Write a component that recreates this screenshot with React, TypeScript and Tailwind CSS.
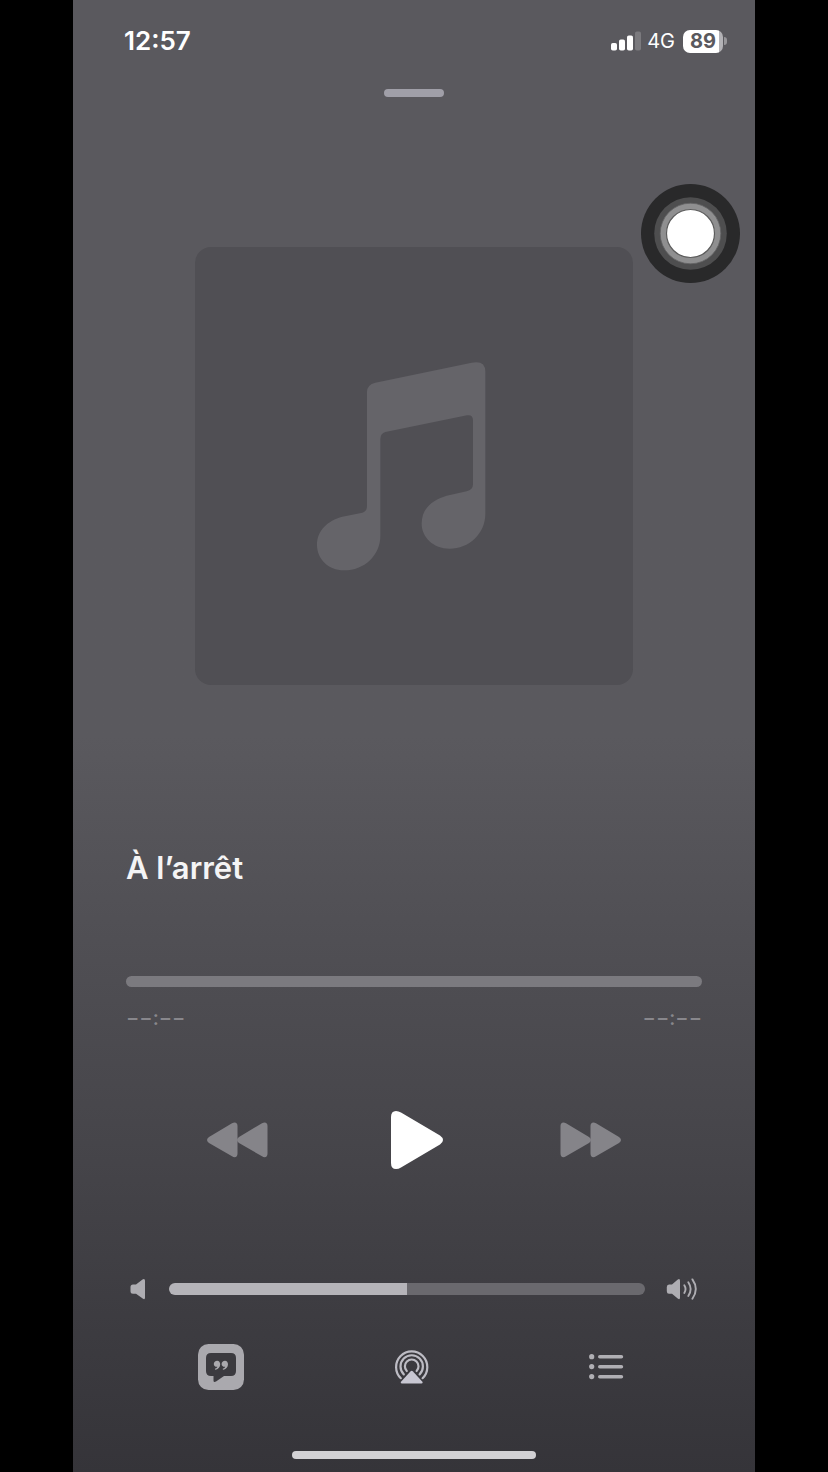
import { useState } from "react";

function StatusBar() {
  return (
    <header className="flex h-[82px] items-center justify-between pr-7 pl-[51px]">
      <time className="text-[26px] leading-8 font-semibold">12:57</time>
      <div className="flex items-center gap-2">
        <div className="flex items-center gap-1.5">
          <svg className="h-5 w-[30px]" viewBox="0 0 30 20" fill="currentColor" aria-hidden="true">
            <rect x="0" y="12" width="6" height="7.5" rx="1.8" />
            <rect x="8" y="8.5" width="6" height="11" rx="1.8" />
            <rect x="16" y="4.5" width="6" height="15" rx="1.8" />
            <rect x="24" y="0.5" width="6" height="19" rx="1.8" opacity="0.2" />
          </svg>
          <span className="text-xl leading-6">4G</span>
        </div>
        <div className="flex items-center gap-px">
          <span className="flex h-[23px] w-10 items-center justify-center rounded-[7px] bg-linear-to-r from-white from-90% to-[#b3b2b6] to-90% text-xl leading-6 font-bold text-[#5a595e]">
            89
          </span>
          <span className="h-2 w-[3px] rounded-r-full bg-[#97969a]" />
        </div>
      </div>
    </header>
  );
}

function AssistiveTouch() {
  return (
    <button type="button" aria-label="AssistiveTouch" className="absolute top-[184px] right-[15px]">
      <svg className="size-[99px]" viewBox="0 0 99 99" aria-hidden="true">
        <circle cx="49.5" cy="49.5" r="49.5" fill="#29292a" />
        <circle cx="49.5" cy="49.5" r="36.3" fill="#4e4e4f" />
        <circle cx="49.5" cy="49.5" r="30.3" fill="#8f8f90" stroke="#636364" strokeWidth="0.8" />
        <circle cx="49.5" cy="49.5" r="24" fill="#fff" stroke="#5c5c5c" strokeWidth="1.2" />
      </svg>
    </button>
  );
}

function Artwork() {
  return (
    <div className="mx-auto mt-[150px] flex aspect-square w-full max-w-[438px] items-center justify-center rounded-2xl bg-[#504f54]">
      <svg className="h-[250px] w-[228px]" viewBox="0 0 684 750" fill="#656469" aria-hidden="true">
        <path d="M201 153 Q201 131 226 125 L515 65 Q556 57 556 92 V518 C556 578 507 623 449 623 C400 623 365 588 365 548 C365 503 395 478 440 464 L500 451 Q519 446 519 430 V238 Q519 220 501 223 L256 273 Q241 277 241 294 V584 C241 643 193 688 132 688 C84 688 51 653 51 612 C51 568 83 539 127 527 L187 515 Q201 512 201 494 Z" />
      </svg>
    </div>
  );
}

function SkipIcon({ flip = false }: { flip?: boolean }) {
  return (
    <svg
      className={`h-9 w-[61px] ${flip ? "-scale-x-100" : ""}`}
      viewBox="0 0 61 36"
      fill="#858489"
      aria-hidden="true"
    >
      <path d="M0.5 4 Q0.5 0.5 3.5 0.5 Q4.5 0.5 6 1.3 L29 15 Q31 16.4 31 18 Q31 19.6 29 21 L6 34.3 Q4.5 35.2 3.5 35.2 Q0.5 35 0.5 31.5 Z" />
      <path d="M30.5 4 Q30.5 0.5 33.5 0.5 Q34.5 0.5 36 1.3 L59 15 Q61 16.4 61 18 Q61 19.6 59 21 L36 34.3 Q34.5 35.2 33.5 35.2 Q30.5 35 30.5 31.5 Z" />
    </svg>
  );
}

function PlaybackControls() {
  return (
    <div className="mt-20 flex h-[60px] items-center justify-between px-[81px]">
      <button type="button" aria-label="Précédent">
        <SkipIcon flip />
      </button>
      <button type="button" aria-label="Lecture">
        <svg className="h-[60px] w-[58px]" viewBox="0 0 58 60" fill="currentColor" aria-hidden="true">
          <path d="M6 7 Q6 1 11 1 Q13.5 1 16 2.5 L55 25.5 Q58 27.6 58 30 Q58 32.6 55 34.6 L16 57.5 Q13.5 59 11 59 Q6 59 6 53 Z" />
        </svg>
      </button>
      <button type="button" aria-label="Suivant">
        <SkipIcon />
      </button>
    </div>
  );
}

function VolumeControl() {
  const [volume, setVolume] = useState(50);

  return (
    <div className="mt-[107px] flex h-6 items-center px-1">
      <svg className="h-6 w-4" viewBox="0 0 16 24" fill="#aeadb2" aria-hidden="true">
        <path d="M3 7.5 H6 L12.5 2.4 Q15 1 15 3.8 V20.7 Q15 23 12.7 21.6 L6 16.8 H3 Q0.5 16.8 0.5 14.3 V10 Q0.5 7.5 3 7.5 Z" />
      </svg>
      <input
        type="range"
        aria-label="Volume"
        min={0}
        max={100}
        value={volume}
        onChange={(e) => setVolume(Number(e.target.value))}
        className="mr-[21px] ml-[23px] h-3 min-w-0 flex-1 appearance-none rounded-full [&::-webkit-slider-thumb]:size-0 [&::-webkit-slider-thumb]:appearance-none"
        style={{ background: `linear-gradient(to right, #b5b4b9 ${volume}%, #6a696e ${volume}%)` }}
      />
      <svg className="h-6 w-8" viewBox="0 0 32 24" fill="none" stroke="#aeadb2" aria-hidden="true">
        <path
          d="M3 7.5 H6 L11.5 2.7 Q14 1 14 3.8 V20.7 Q14 23 11.7 21.6 L6 16.8 H3 Q0.8 16.8 0.8 14.3 V10 Q0.8 7.5 3 7.5 Z"
          fill="#aeadb2"
          stroke="none"
        />
        <g strokeWidth="1.9" strokeLinecap="round">
          <path d="M18.3 8.2 Q20.8 12 18.3 15.9" />
          <path d="M22.3 5.2 Q27 12 22.3 19" />
          <path d="M26.4 2.4 Q33.2 12 26.4 21.8" />
        </g>
      </svg>
    </div>
  );
}

function BottomActions() {
  return (
    <div className="mt-[43px] flex items-center justify-between px-[72px]">
      <button type="button" aria-label="Paroles">
        <svg className="size-[46px]" viewBox="0 0 46 46" aria-hidden="true">
          <rect width="46" height="46" rx="10.5" fill="#aaa9ae" />
          <path
            d="M13 9 H33 Q38 9 38 14 V27 Q38 32 33 32 H26 L18 37.6 Q15.5 39 15.5 36.4 V32 H13 Q8 32 8 27 V14 Q8 9 13 9 Z"
            fill="#3b3a3f"
          />
          <g fill="#aaa9ae">
            <path d="M19.2 16.7 C21 16.7 22.2 18.2 22.2 20.3 C22.2 23 20.3 25.4 17.8 25.8 C16.8 25.9 16.6 25 17.4 24.6 C18.5 24.1 19.2 23.5 19.4 22.7 C17.4 23 15.8 21.7 15.8 19.9 C15.8 18 17.3 16.7 19.2 16.7 Z" />
            <path d="M27 16.7 C28.8 16.7 30 18.2 30 20.3 C30 23 28.1 25.4 25.6 25.8 C24.6 25.9 24.4 25 25.2 24.6 C26.3 24.1 27 23.5 27.2 22.7 C25.2 23 23.6 21.7 23.6 19.9 C23.6 18 25.1 16.7 27 16.7 Z" />
          </g>
        </svg>
      </button>
      <button type="button" aria-label="AirPlay">
        <svg className="size-[46px]" viewBox="0 0 46 46" fill="none" stroke="#bdbcc4" aria-hidden="true">
          <g strokeWidth="2.2" strokeLinecap="round">
            <path d="M9.8 34.2 A15.6 15.6 0 1 1 31.6 34.2" />
            <path d="M12.8 30.4 A11.2 11.2 0 1 1 28.6 30.4" />
            <path d="M15.8 27 A6.8 6.8 0 1 1 25.6 27" />
          </g>
          <path
            d="M19.4 27.4 Q20.7 26 22 27.4 L31.4 37.8 Q32.4 39.6 30.6 39.6 H10.8 Q9 39.6 10 37.8 Z"
            fill="#c8c7d2"
            stroke="none"
          />
        </svg>
      </button>
      <button type="button" aria-label="File d’attente">
        <svg className="size-[46px]" viewBox="0 0 46 46" fill="#b0afb4" aria-hidden="true">
          <circle cx="7.7" cy="12.7" r="2.6" />
          <circle cx="7.7" cy="22.6" r="2.6" />
          <circle cx="7.7" cy="32.6" r="2.6" />
          <rect x="14" y="11" width="25.2" height="3.6" rx="1.8" />
          <rect x="14" y="20.9" width="25.2" height="3.6" rx="1.8" />
          <rect x="14" y="30.9" width="25.2" height="3.6" rx="1.8" />
        </svg>
      </button>
    </div>
  );
}

export default function App() {
  return (
    <div className="flex min-h-screen bg-black px-[73px] font-['Inter','Liberation_Sans',sans-serif] text-white">
      <main className="relative flex min-w-0 flex-1 flex-col bg-linear-to-b from-[#5a595e] from-50% via-[#48474c] via-75% to-[#353439] pb-[13px]">
        <StatusBar />
        <button
          type="button"
          aria-label="Fermer le lecteur"
          className="mx-auto mt-[7px] h-2 w-[60px] rounded-full bg-[#a09fa8]"
        />
        <AssistiveTouch />

        <section className="flex flex-col px-[53px]">
          <Artwork />
          <h1 className="mt-[163px] text-[31px] leading-10 font-semibold text-[#f4f4f5]">À l’arrêt</h1>

          <input
            type="range"
            aria-label="Position de lecture"
            defaultValue={0}
            disabled
            className="mt-[88px] h-[11px] w-full appearance-none rounded-full bg-[#7b7a7f] [&::-webkit-slider-thumb]:size-0 [&::-webkit-slider-thumb]:appearance-none"
          />
          <div className="mt-[19px] flex justify-between text-xl leading-6 font-medium text-[#88878c]">
            <span>−−:−−</span>
            <span>−−:−−</span>
          </div>

          <PlaybackControls />
          <VolumeControl />
          <BottomActions />
        </section>

        <div className="mx-auto mt-auto h-2 w-[244px] rounded-full bg-[#d2d1d4]" />
      </main>
    </div>
  );
}
